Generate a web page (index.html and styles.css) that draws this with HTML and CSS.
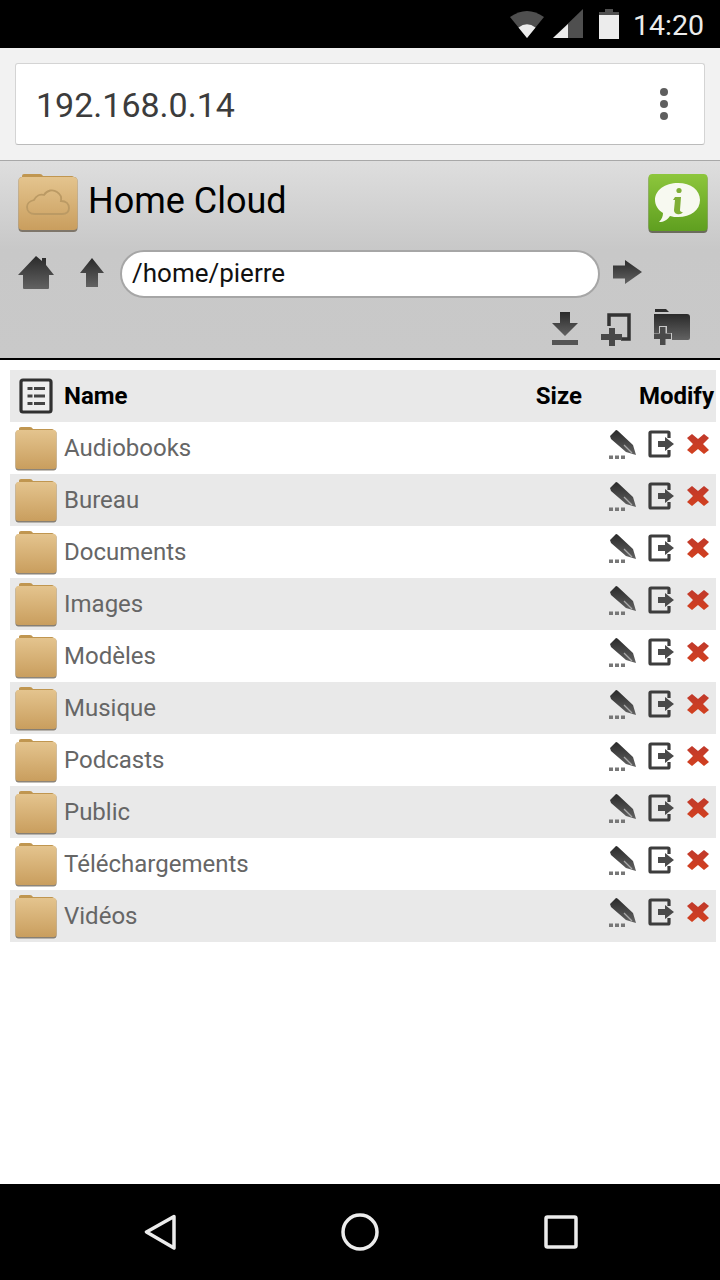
FILE: index.html
```html
<!DOCTYPE html>
<html lang="fr">
<head>
<meta charset="utf-8">
<title>Home Cloud</title>
<link rel="stylesheet" href="styles.css">
</head>
<body>
<svg class="sprite" xmlns="http://www.w3.org/2000/svg">
  <defs>
    <linearGradient id="gFolder" x1="0" y1="0" x2="0" y2="1"><stop offset="0" stop-color="#e4c48e"/><stop offset="1" stop-color="#c99e5e"/></linearGradient>
    <linearGradient id="gDark" x1="0" y1="0" x2="0" y2="1"><stop offset="0" stop-color="#2a2a2a"/><stop offset="1" stop-color="#626262"/></linearGradient>
    <linearGradient id="gGreen" x1="0" y1="0" x2="0" y2="1"><stop offset="0" stop-color="#8dc63c"/><stop offset="1" stop-color="#5f9f20"/></linearGradient>
    <linearGradient id="gRed" x1="0" y1="0" x2="0" y2="1"><stop offset="0" stop-color="#c0392b"/><stop offset="1" stop-color="#d2401f"/></linearGradient>
    <symbol id="folder" viewBox="0 0 42 44">
      <path d="M4 1.500Q4 0 6 0h9q2 0 3 2h19q2 0 2 2v4H4z" fill="#c09650"/>
      <rect x="0.500" y="3.500" width="41" height="40" rx="3" fill="#5d5140" opacity=".7"/>
      <rect x="0.500" y="3" width="41" height="39" rx="3" fill="url(#gFolder)"/>
    </symbol>
    <symbol id="home" viewBox="0 0 36 33">
      <path d="M18 0l6 5V2h4v7l8 10h-5v13q0 1-1 1H6q-1 0-1-1V19H0z" fill="url(#gDark)"/>
    </symbol>
    <symbol id="up" viewBox="0 0 24 29">
      <path d="M12 0l12 15h-6v14H6V15H0z" fill="url(#gDark)"/>
    </symbol>
    <symbol id="go" viewBox="0 0 29 24">
      <path d="M0 5.500h12V0l17 12-17 12v-5.500H0z" fill="url(#gDark)"/>
    </symbol>
    <symbol id="download" viewBox="0 0 26 33">
      <path d="M8 0h10v11h8L13 24 0 11h8z" fill="url(#gDark)"/>
      <rect x="0" y="28" width="26" height="5" fill="#555"/>
    </symbol>
    <symbol id="newfile" viewBox="0 0 31 34">
      <path d="M9 14V3h20v24h-8" fill="none" stroke="#333" stroke-width="3.500"/>
      <path d="M9 16h6v6h7v6h-7v6H9v-6H1v-6h8z" fill="#484848"/>
    </symbol>
    <symbol id="newfolder" viewBox="0 0 36 36">
      <path d="M1 0h11l3 3H1z" fill="#2e2e2e"/>
      <path d="M0 5h33q3 0 3 3v21q0 2-2 2H18v-7h-5v-7H5v7H0z" fill="url(#gDark)"/>
      <path d="M6 18h5.500v6.500H17v5.500h-5.500v6H6v-6H0v-5.500h6z" fill="#4a4a4a"/>
    </symbol>
    <symbol id="info" viewBox="0 0 60 60">
      <rect x="0.500" y="1" width="59" height="58" rx="4" fill="#6b6b5c"/>
      <rect x="0.500" y="0" width="59" height="57" rx="4" fill="url(#gGreen)"/>
      <path d="M30 9c13 0 22 7 22 17s-9 17-22 17c-3 0-5 0-8-1-3 4-6 6-11 6 3-3 4-6 4-9-5-3-8-8-8-13 0-10 10-17 23-17z" fill="#f7f9f0"/>
      <circle cx="31" cy="16.500" r="2.600" fill="#7fae36"/>
      <path d="M27 23h6l-1 13q0 2 3 2-2 3-6 2-3-1-3-4l1-10h-2z" fill="#7fae36"/>
    </symbol>
    <symbol id="list" viewBox="0 0 34 36">
      <rect x="2" y="2" width="30" height="32" rx="2" fill="#eee" stroke="#303030" stroke-width="3.200"/>
      <g fill="#444"><rect x="8.500" y="9" width="5" height="3"/><rect x="15" y="9" width="11" height="3"/><rect x="8.500" y="16.500" width="5" height="3"/><rect x="15" y="16.500" width="11" height="3"/><rect x="8.500" y="24" width="5" height="3"/><rect x="15" y="24" width="11" height="3"/></g>
    </symbol>
    <symbol id="edit" viewBox="0 0 28 30">
      <path d="M1 6l6-6q1 0 2 1l15 14 3 10-10-3L2 9z" fill="url(#gDark)"/>
      <path d="M15 15l8 8" stroke="#a8a8a8" stroke-width="1.200"/>
      <g fill="#777"><rect x="0" y="25.500" width="4" height="3.500"/><rect x="6" y="25.500" width="4" height="3.500"/><rect x="12" y="25.500" width="4" height="3.500"/></g>
    </symbol>
    <symbol id="move" viewBox="0 0 26 28">
      <path d="M21 8V3q0-1-1-1H3q-1 0-1 1v22q0 1 1 1h17q1 0 1-1v-5" fill="none" stroke="#3d3d3d" stroke-width="3.200"/>
      <path d="M10 11h7V7l9 7-9 7v-4h-7z" fill="#4a4a4a"/>
    </symbol>
    <symbol id="del" viewBox="0 0 22 20">
      <path d="M5 0l6 5 6-5 5 4-6 6 6 6-5 4-6-5-6 5-5-4 6-6-6-6z" fill="url(#gRed)"/>
    </symbol>
  </defs>
</svg>

<div class="screen">
  <div class="statusbar">
    <svg class="st-wifi" viewBox="0 0 34 28"><path d="M0 7Q17-5 34 7L17 28z" fill="#4f4f4f"/><path d="M8.500 17.500Q17 11 25.500 17.500L17 28z" fill="#ececec"/></svg>
    <svg class="st-signal" viewBox="0 0 30 30"><path d="M30 0v29H0z" fill="#4f4f4f"/><path d="M15 15v14H0z" fill="#ececec"/></svg>
    <svg class="st-batt" viewBox="0 0 20 30"><path d="M6 0h8v3H6z M0 3h20v4H0z" fill="#4f4f4f"/><path d="M0 6h20v24H0z" fill="#ececec"/></svg>
    <span class="clock">14:20</span>
  </div>

  <div class="chrome">
    <div class="urlbox">
      <span class="url">192.168.0.14</span>
      <span class="dots"><i></i><i></i><i></i></span>
    </div>
  </div>

  <header class="apphead">
    <div class="titlerow">
      <div class="brand">
        <svg class="brandicon" viewBox="0 0 60 60">
          <path d="M4 4Q4 2 6 2h16q2 0 3 2h29q2 0 2 2v6H4z" fill="#c09650"/>
          <rect x="0.500" y="5" width="59" height="55" rx="4" fill="#5d5140" opacity=".7"/>
          <rect x="0.500" y="5" width="59" height="53" rx="4" fill="url(#gFolder)"/>
          <path d="M17 42c-5 0-8-3-8-7s3-6 7-7c2-4 6-6 10-5 3-5 9-6 13-3 3 2 5 5 4 9 5 0 8 3 8 7s-3 6-7 6z" fill="none" stroke="#bb9a64" stroke-width="1.800"/>
        </svg>
        <h1 class="title">Home Cloud</h1>
      </div>
      <svg class="infoicon"><use href="#info"/></svg>
    </div>
    <div class="pathrow">
      <svg class="ic-home"><use href="#home"/></svg>
      <svg class="ic-up"><use href="#up"/></svg>
      <div class="pathbox">/home/pierre</div>
      <svg class="ic-go"><use href="#go"/></svg>
    </div>
    <div class="toolrow">
      <svg class="ic-download"><use href="#download"/></svg>
      <svg class="ic-newfile"><use href="#newfile"/></svg>
      <svg class="ic-newfolder"><use href="#newfolder"/></svg>
    </div>
  </header>

  <main class="content">
    <div class="filetable">
      <div class="row head">
        <svg class="ic-list"><use href="#list"/></svg>
        <span class="cell-name">Name</span>
        <span class="cell-size">Size</span>
        <span class="cell-mod">Modify</span>
      </div>
      <div class="row"><svg class="ic-folder"><use href="#folder"/></svg><span class="cell-name">Audiobooks</span><span class="actions"><svg class="ic-edit"><use href="#edit"/></svg><svg class="ic-move"><use href="#move"/></svg><svg class="ic-del"><use href="#del"/></svg></span></div>
      <div class="row alt"><svg class="ic-folder"><use href="#folder"/></svg><span class="cell-name">Bureau</span><span class="actions"><svg class="ic-edit"><use href="#edit"/></svg><svg class="ic-move"><use href="#move"/></svg><svg class="ic-del"><use href="#del"/></svg></span></div>
      <div class="row"><svg class="ic-folder"><use href="#folder"/></svg><span class="cell-name">Documents</span><span class="actions"><svg class="ic-edit"><use href="#edit"/></svg><svg class="ic-move"><use href="#move"/></svg><svg class="ic-del"><use href="#del"/></svg></span></div>
      <div class="row alt"><svg class="ic-folder"><use href="#folder"/></svg><span class="cell-name">Images</span><span class="actions"><svg class="ic-edit"><use href="#edit"/></svg><svg class="ic-move"><use href="#move"/></svg><svg class="ic-del"><use href="#del"/></svg></span></div>
      <div class="row"><svg class="ic-folder"><use href="#folder"/></svg><span class="cell-name">Modèles</span><span class="actions"><svg class="ic-edit"><use href="#edit"/></svg><svg class="ic-move"><use href="#move"/></svg><svg class="ic-del"><use href="#del"/></svg></span></div>
      <div class="row alt"><svg class="ic-folder"><use href="#folder"/></svg><span class="cell-name">Musique</span><span class="actions"><svg class="ic-edit"><use href="#edit"/></svg><svg class="ic-move"><use href="#move"/></svg><svg class="ic-del"><use href="#del"/></svg></span></div>
      <div class="row"><svg class="ic-folder"><use href="#folder"/></svg><span class="cell-name">Podcasts</span><span class="actions"><svg class="ic-edit"><use href="#edit"/></svg><svg class="ic-move"><use href="#move"/></svg><svg class="ic-del"><use href="#del"/></svg></span></div>
      <div class="row alt"><svg class="ic-folder"><use href="#folder"/></svg><span class="cell-name">Public</span><span class="actions"><svg class="ic-edit"><use href="#edit"/></svg><svg class="ic-move"><use href="#move"/></svg><svg class="ic-del"><use href="#del"/></svg></span></div>
      <div class="row"><svg class="ic-folder"><use href="#folder"/></svg><span class="cell-name">Téléchargements</span><span class="actions"><svg class="ic-edit"><use href="#edit"/></svg><svg class="ic-move"><use href="#move"/></svg><svg class="ic-del"><use href="#del"/></svg></span></div>
      <div class="row alt"><svg class="ic-folder"><use href="#folder"/></svg><span class="cell-name">Vidéos</span><span class="actions"><svg class="ic-edit"><use href="#edit"/></svg><svg class="ic-move"><use href="#move"/></svg><svg class="ic-del"><use href="#del"/></svg></span></div>
    </div>
  </main>

  <nav class="navbar">
    <svg class="nav-back" viewBox="0 0 32 36"><path d="M30 2.500L2.500 18 30 34z" fill="none" stroke="#ececec" stroke-width="3.500" stroke-linejoin="round"/></svg>
    <svg class="nav-home" viewBox="0 0 38 38"><circle cx="19" cy="19" r="17" fill="none" stroke="#ececec" stroke-width="3.500"/></svg>
    <svg class="nav-recent" viewBox="0 0 34 34"><rect x="2" y="2" width="30" height="30" rx="1.500" fill="none" stroke="#ececec" stroke-width="3.500"/></svg>
  </nav>
</div>
</body>
</html>
```

FILE: styles.css
```css
* { box-sizing: border-box; }
html, body { margin: 0; padding: 0; }
body { font-family: Roboto, "Liberation Sans", sans-serif; background: #fff; }
svg { display: block; flex: none; }
.sprite { width: 0; height: 0; }

.screen { display: flex; flex-direction: column; height: 1280px; overflow: hidden; }

.statusbar { height: 48px; background: #000; display: flex; align-items: center; justify-content: flex-end; padding-right: 16px; flex: none; }
.st-wifi { width: 34px; height: 28px; margin-right: 9px; margin-bottom: 1px; }
.st-signal { width: 30px; height: 30px; margin-right: 16px; }
.st-batt { width: 20px; height: 30px; margin-right: 14px; margin-bottom: 1px; }
.clock { color: #ececec; font-size: 28.5px; line-height: 48px; padding-top: 3px; }

.chrome { height: 113px; background: #f2f2f2; padding: 15px 15px 0; border-bottom: 1px solid #a8a8a8; flex: none; }
.urlbox { height: 82px; background: #fff; border: 1px solid #d4d4d4; border-bottom-color: #bbb; border-radius: 3px; display: flex; align-items: center; justify-content: space-between; padding: 0 36px 0 20px; }
.url { font-size: 34px; color: #3c3c3c; padding-top: 2px; }
.dots { display: flex; flex-direction: column; gap: 4px; }
.dots i { display: block; width: 8px; height: 8px; border-radius: 50%; background: #5e5e5e; }

.apphead { height: 199px; background: linear-gradient(#dedede, #c8c8c8 45%, #c9c9c9); border-bottom: 2px solid #000; padding: 11px 12px 0 18px; flex: none; }
.titlerow { display: flex; justify-content: space-between; align-items: flex-start; height: 78px; }
.brand { display: flex; align-items: center; gap: 10px; }
.brandicon, .infoicon, .pathrow svg, .toolrow svg, .row svg { filter: blur(0.6px); }
.brandicon { width: 60px; height: 60px; }
.title { margin: 0; font-size: 36px; font-weight: 400; color: #000; line-height: 56px; padding-bottom: 3px; }
.infoicon { width: 60px; height: 60px; margin-top: 2px; }
.pathrow { display: flex; align-items: center; height: 48px; }
.ic-home { width: 36px; height: 33px; margin-right: 26px; margin-bottom: 3px; }
.ic-up { width: 24px; height: 29px; margin-right: 16px; margin-bottom: 3px; }
.pathbox { width: 480px; height: 48px; border-radius: 24px; background: #fff; border: 2px solid #a6a6a6; font-size: 26px; line-height: 42px; padding-left: 10px; color: #111; }
.ic-go { width: 29px; height: 24px; margin-left: 13px; margin-bottom: 4px; }
.toolrow { display: flex; justify-content: flex-end; align-items: flex-start; margin-top: 14px; padding-right: 18px; }
.ic-download { width: 26px; height: 33px; margin-right: 22px; }
.ic-newfile { width: 31px; height: 34px; margin-right: 23px; }
.ic-newfolder { width: 36px; height: 36px; margin-top: -3px; }

.content { flex: 1; padding: 10px 4px 0 10px; background: #fff; }
.row { height: 52px; display: flex; align-items: center; font-size: 24px; color: #666; }
.alt, .head { background: #e9e9e9; }
.head { font-weight: 700; color: #000; }
.ic-list { width: 34px; height: 36px; margin: 0 11px 0 9px; }
.ic-folder { width: 42px; height: 44px; margin: 2px 7px 0 5px; }
.cell-name { flex: 1; }
.cell-size { margin-right: 57px; }
.cell-mod { margin-right: 2px; }
.actions { display: flex; align-items: flex-start; padding-right: 7px; height: 52px; padding-top: 8px; }
.ic-edit { width: 28px; height: 30px; margin-right: 11px; }
.ic-move { width: 26px; height: 28px; margin-right: 13px; }
.ic-del { width: 22px; height: 20px; margin-top: 4px; }

.navbar { height: 96px; background: #000; display: flex; align-items: center; flex: none; padding-left: 144px; }
.nav-back { width: 32px; height: 36px; margin-right: 165px; }
.nav-home { width: 38px; height: 38px; margin-right: 165px; }
.nav-recent { width: 34px; height: 34px; }
```
